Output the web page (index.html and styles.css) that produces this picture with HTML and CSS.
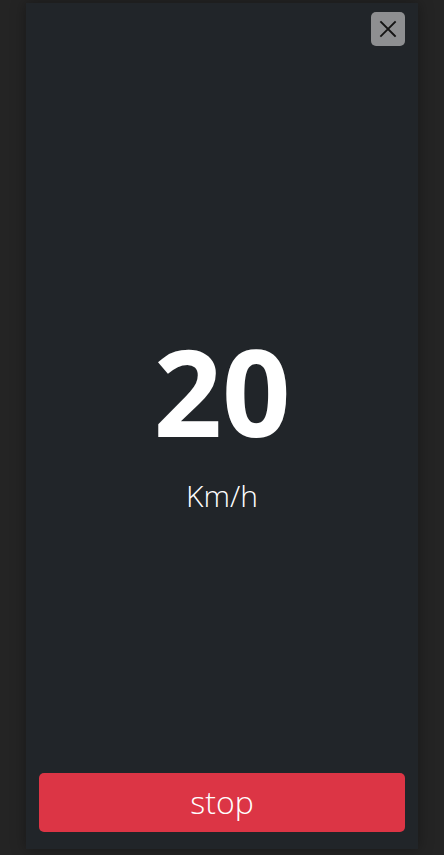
FILE: index.html
```html
<!DOCTYPE html>
<html lang="en">
<head>
<meta charset="utf-8">
<title>Speed</title>
<link rel="stylesheet" href="styles.css">
</head>
<body>
<div class="panel">
  <div class="top-bar">
    <button class="close-btn" aria-label="Close">
      <svg width="18" height="18" viewBox="0 0 18 18"><path d="M2 2 L16 16 M16 2 L2 16" stroke="#141414" stroke-width="1.8" stroke-linecap="square"/></svg>
    </button>
  </div>
  <div class="readout">
    <div class="speed">20</div>
    <div class="unit">Km/h</div>
  </div>
  <button class="stop-btn">stop</button>
</div>
</body>
</html>
```

FILE: styles.css
```css
html, body {
  margin: 0;
  padding: 0;
  background: #242424;
  height: 100%;
}
body {
  padding: 3px 26px 6px;
  box-sizing: border-box;
  font-family: "Open Sans", "Liberation Sans", sans-serif;
}
.panel {
  height: 846px;
  background: #212529;
  box-shadow: 0 0 14px rgba(0, 0, 0, 0.35);
  display: flex;
  flex-direction: column;
  padding: 9px 13px 17px;
  box-sizing: border-box;
}
.top-bar {
  display: flex;
  justify-content: flex-end;
}
.close-btn {
  width: 34px;
  height: 34px;
  border: none;
  border-radius: 5px;
  background: #8e8f91;
  padding: 0;
  display: flex;
  align-items: center;
  justify-content: center;
}
.readout {
  flex: 1;
  display: flex;
  flex-direction: column;
  align-items: center;
  justify-content: center;
  padding-top: 23px;
}
.speed {
  font-size: 120px;
  font-weight: 700;
  line-height: 1;
  color: #ffffff;
}
.unit {
  margin-top: 30px;
  font-size: 30px;
  font-weight: 300;
  line-height: 1;
  color: #ffffff;
}
.stop-btn {
  height: 59px;
  border: none;
  border-radius: 5px;
  background: #dc3545;
  color: #ffffff;
  font-family: "Open Sans", "Liberation Sans", sans-serif;
  font-size: 32px;
  font-weight: 300;
  line-height: 1;
  padding: 0 0 2px;
}
```
